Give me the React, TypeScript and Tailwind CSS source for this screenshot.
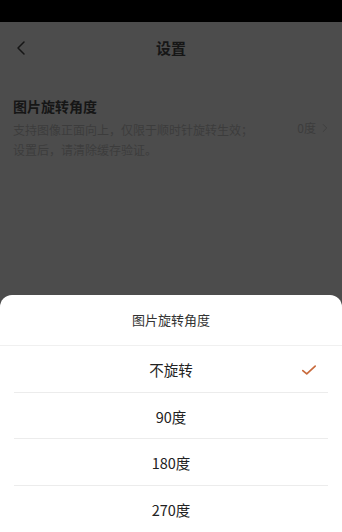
import { ChevronLeft, ChevronRight } from "lucide-react";

const options = ["不旋转", "90度", "180度", "270度"];

export default function App() {
    const selected = 0;

    return (
        <div
            className="relative w-[342px] h-[532px] overflow-hidden bg-[#4c4c4c] flex flex-col"
            style={{ fontFamily: '"Noto Sans CJK SC", "Liberation Sans", sans-serif' }}
        >
            {/* Status bar */}
            <div className="h-[22px] bg-black shrink-0" />

            {/* Header */}
            <div className="h-[52px] flex items-center relative shrink-0">
                <ChevronLeft className="absolute left-[9px] w-[24px] h-[24px] text-[#161616]" strokeWidth={1.5} />
                <div className="flex-1 text-center text-[15px] font-bold text-[#161616]">设置</div>
            </div>

            {/* Setting row */}
            <div className="flex items-start pl-[13px] pr-[10px] pt-[22px]">
                <div className="flex-1">
                    <div className="text-[14px] font-bold text-[#161616] leading-[20px]">图片旋转角度</div>
                    <div className="mt-[4px] text-[12px] text-[#3c3c3c] leading-[20px]">
                        支持图像正面向上，仅限于顺时针旋转生效；
                        <br />
                        设置后，请清除缓存验证。
                    </div>
                </div>
                <div className="flex items-center mt-[22px] text-[12px] text-[#3c3c3c] leading-[20px]">
                    <span>0度</span>
                    <ChevronRight className="w-[14px] h-[14px] ml-[2px] text-[#3c3c3c]" strokeWidth={1.4} />
                </div>
            </div>

            {/* Bottom sheet */}
            <div className="absolute left-0 right-0 bottom-0 top-[295px] bg-white rounded-t-[12px] flex flex-col">
                <div className="h-[53px] flex items-center justify-center text-[13px] text-[#333] border-b border-[#f0f0f0]">
                    图片旋转角度
                </div>
                <div className="px-[14px] flex flex-col">
                    {options.map((opt, i) => (
                        <div
                            key={opt}
                            className={`relative h-[46.5px] pt-[3px] flex items-center justify-center text-[14.5px] text-[#222] ${
                                i < options.length - 1 ? "border-b border-[#ececec]" : ""
                            }`}
                        >
                            {opt}
                            {i === selected && (
                                <svg
                                    className="absolute right-[10px] w-[18px] h-[18px]"
                                    viewBox="0 0 16 16"
                                    fill="none"
                                    stroke="#c86a3c"
                                    strokeWidth="1.5"
                                    strokeLinecap="round"
                                    strokeLinejoin="round"
                                >
                                    <path d="M2.5 8.5 L6 11.5 L13.5 4.5" />
                                </svg>
                            )}
                        </div>
                    ))}
                </div>
            </div>
        </div>
    );
}
